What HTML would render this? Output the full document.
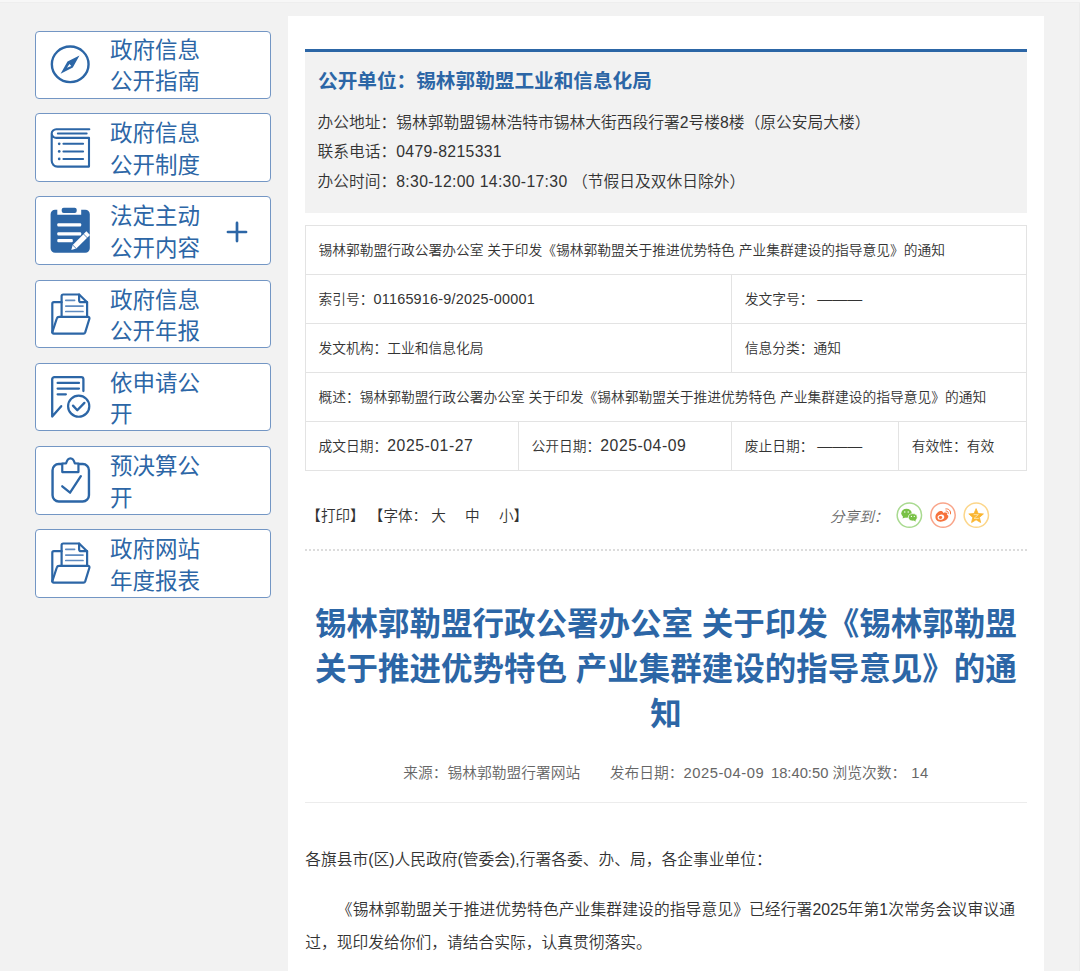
<!DOCTYPE html>
<html lang="zh-CN">
<head>
<meta charset="utf-8">
<title>锡林郭勒盟行政公署办公室 关于印发《锡林郭勒盟关于推进优势特色 产业集群建设的指导意见》的通知</title>
<style>
*{box-sizing:border-box;margin:0;padding:0}
html,body{width:1080px;height:971px;overflow:hidden;background:#f2f2f2}
body{position:relative;font-family:"Liberation Sans","Noto Sans CJK SC",sans-serif;color:#333;font-weight:350;-webkit-font-smoothing:antialiased}
.topstrip{position:absolute;left:0;top:0;width:1080px;height:3px;background:#f7f7f7;border-bottom:1px solid #eee}
.rstrip{position:absolute;left:1079px;top:3px;width:1px;height:968px;background:#ebebeb}
/* sidebar */
.nav{position:absolute;left:35px;width:236px;height:68.5px;border:1px solid #7396c4;border-radius:4px;background:#fff;color:#2c66a6}
.nav svg{position:absolute;left:0;top:0}
.nav .t{position:absolute;left:74px;top:4.2px;width:100px;font-size:22.5px;line-height:31.5px;letter-spacing:0;font-weight:400}
.n1 svg{margin-top:-.9px;margin-left:-.2px}.n1 .t{margin-top:-.8px}
.nav .plus{position:absolute;left:191.5px;top:23.7px;width:20px;height:20px}
.nav .plus:before,.nav .plus:after{content:"";position:absolute;background:#2c66a6}
.nav .plus:before{left:0;top:8.8px;width:20px;height:2.4px}
.nav .plus:after{left:8.8px;top:0;width:2.4px;height:20px}
/* main */
.panel{position:absolute;left:288px;top:16px;width:755.5px;height:960px;background:#fff}
.bar{position:absolute;left:305px;top:49px;width:721.5px;height:4px;background:#2c66a6}
.info{position:absolute;left:305px;top:52px;width:721.5px;height:161px;background:#f2f2f2}
.info h3{position:absolute;left:13px;top:15.3px;font-size:19.65px;line-height:28px;font-weight:bold;color:#2c66a6;white-space:nowrap}
.info p{position:absolute;left:12.5px;font-size:15.75px;line-height:29.25px;white-space:nowrap;color:#333}
table.meta{position:absolute;left:305px;top:225px;width:721.5px;border-collapse:collapse;table-layout:fixed;font-size:13.75px;color:#333}
table.meta td{border:1px solid #e3e3e3;height:49px;padding:0 0 3px 12.5px;white-space:nowrap;vertical-align:middle}
table.meta td b{font-weight:normal;font-size:15.75px}
.tools{position:absolute;left:306.3px;top:502px;font-size:14.625px;line-height:28px;color:#333;white-space:nowrap}
.tools i{display:inline-block;width:19.2px}
.share{position:absolute;left:830px;top:502.5px;font-size:14.625px;line-height:28px;color:#666;font-style:italic;white-space:nowrap}
.dots{position:absolute;left:305px;top:549px;width:721.5px;height:2px;background:repeating-linear-gradient(90deg,#dcdcdc 0,#dcdcdc 2px,transparent 2px,transparent 4px)}
h1{position:absolute;left:305.5px;top:601.5px;width:721px;text-align:center;font-size:31.5px;line-height:45px;font-weight:bold;color:#2c66a6}
.src{position:absolute;left:305.5px;top:758.5px;width:721px;text-align:center;font-size:14.75px;line-height:28px;color:#666;white-space:nowrap}
.hr{position:absolute;left:305px;top:802px;width:721.5px;height:1px;background:#ececec}
.body{position:absolute;left:305.3px;top:842.6px;width:709.6px;font-size:15.75px;line-height:33.75px;color:#333;text-align:justify}
.body p{margin-bottom:16.25px}
.l{letter-spacing:.34px}
.n{font-size:14.4px;letter-spacing:.23px}
.d{font-size:15.75px;letter-spacing:.55px}
.dash{font-size:15px}
.s{letter-spacing:.55px}
.s2{letter-spacing:0;margin-left:2.5px}
</style>
</head>
<body>
<div class="topstrip"></div><div class="rstrip"></div>

<div class="nav n1" style="top:30.6px;height:68.4px"><svg width="70" height="69" viewBox="0 0 70 69" style="left:-0.8px;top:-0.8px" fill="none" stroke="#2c66a6" stroke-width="2.3" stroke-linecap="round" stroke-linejoin="round"><ellipse cx="35.2" cy="34.35" rx="18.35" ry="17.8" stroke-width="2.4"/><path d="M44.5 25.5 L37.8 37.6 L25.6 43.7 L32.5 31.6 Z M31.9 37.7 L34.5 34 L36.3 35.9 Z" fill="#2c66a6" fill-rule="evenodd" stroke="none"/></svg><div class="t">政府信息<br>公开指南</div></div>
<div class="nav" style="top:113px"><svg width="70" height="69" viewBox="0 0 70 69" style="left:-0.8px;top:-0.8px" fill="none" stroke="#2c66a6" stroke-width="2.3" stroke-linecap="round" stroke-linejoin="round"><path d="M54.3 16.2 H21.5 A4.6 4.35 0 0 0 16.7 20.6 A4.6 4.35 0 0 0 21.5 24.9 H54 V53.6 H22.5 A5.8 5.8 0 0 1 16.7 47.8 V20.6" stroke-width="2.1"/><path d="M22.8 20.5 H51.7" stroke-width="1.9"/><g stroke-width="2"><path d="M28.4 30.8 H48.1 M28.4 38.4 H48.1 M28.4 45.9 H48.1"/></g><g fill="#2c66a6" stroke="none"><circle cx="24.2" cy="30.8" r="1.35"/><circle cx="24.2" cy="38.4" r="1.35"/><circle cx="24.2" cy="45.9" r="1.35"/></g></svg><div class="t">政府信息<br>公开制度</div></div>
<div class="nav" style="top:196.25px"><svg width="70" height="69" viewBox="0 0 70 69" style="left:-0.8px;top:-0.8px" fill="none" stroke="#2c66a6" stroke-width="2.3" stroke-linecap="round" stroke-linejoin="round"><g stroke="none"><path fill="#2c66a6" d="M20.1 13.65 H22.3 V18.75 H46.2 V13.65 H50.3 A4.5 4.5 0 0 1 54.8 18.15 V52.25 A4.5 4.5 0 0 1 50.3 56.75 H20.1 A4.5 4.5 0 0 1 15.6 52.25 V18.15 A4.5 4.5 0 0 1 20.1 13.65 Z"/><rect fill="#2c66a6" x="26.7" y="11.7" width="15" height="5.3" rx="2"/><g fill="#fff"><rect x="22.3" y="27.3" width="23.9" height="3.3" rx="1"/><rect x="22.3" y="36.3" width="23.9" height="3.3" rx="1"/><rect x="22.3" y="42.9" width="15.5" height="3.3" rx="1"/><path d="M36.3 54.1 L37.7 49 L51.4 35.3 L55 38.9 L41.3 52.6 Z"/></g></g><path d="M37.9 49.2 L41.1 52.4 M48.6 38.1 L52.2 41.7" stroke="#2c66a6" stroke-width="0.8"/></svg><div class="t">法定主动<br>公开内容</div><svg width="26" height="26" viewBox="0 0 26 26" style="left:188.3px;top:21.6px" fill="none" stroke="#2c66a6" stroke-width="2.7" stroke-linecap="round"><path d="M3.95 13 H22.05 M13 3.95 V22.05"/></svg></div>
<div class="nav" style="top:279.5px"><svg width="70" height="69" viewBox="0 0 70 69" style="left:-0.8px;top:-0.8px" fill="none" stroke="#2c66a6" stroke-width="2.3" stroke-linecap="round" stroke-linejoin="round"><g transform="translate(0.7,-0.1)"><path d="M25.9 36.8 V16.2 A1.6 1.6 0 0 1 27.5 14.6 H43.4 L51.4 22.3 V36.8" stroke-width="2.2"/><path d="M43.4 14.6 V20.3 A2 2 0 0 0 45.4 22.3 H51.4" stroke-width="2.2"/><path d="M30.1 20.4 H38.9 M30.1 26.2 H47.3 M30.1 31.6 H47.3" stroke-width="1.7" stroke="#5f8bc0"/><path d="M25.9 22.3 H18.2 A1.6 1.6 0 0 0 16.6 23.9 V52.5" stroke-width="2.2"/><path d="M23.4 36.9 H52.3 A1.5 1.5 0 0 1 53.7 38.9 L49.5 52.5 A1.8 1.8 0 0 1 47.8 53.7 H18 A1.4 1.4 0 0 1 16.7 51.9 L21.1 38.6 A2.4 2.4 0 0 1 23.4 36.9 Z" stroke-width="2.2"/></g></svg><div class="t">政府信息<br>公开年报</div></div>
<div class="nav" style="top:362.75px"><svg width="70" height="69" viewBox="0 0 70 69" style="left:-0.8px;top:-0.8px" fill="none" stroke="#2c66a6" stroke-width="2.3" stroke-linecap="round" stroke-linejoin="round"><g transform="translate(0.6,0)"><path d="M47.8 28.1 V16.3 A2.2 2.2 0 0 0 45.6 14.1 H18.8 A2.2 2.2 0 0 0 16.6 16.3 V53.6 L25.6 43.2" stroke-width="2.3"/><path d="M22 19.9 H43.4 M22 25.6 H43.4 M22 31.3 H30.3" stroke-width="2.2"/><circle cx="43.1" cy="43.15" r="10.6" stroke-width="2.2"/><path d="M37.4 42.6 L41.7 47.2 L48.8 39.9" stroke-width="2.3"/></g></svg><div class="t">依申请公<br>开</div></div>
<div class="nav" style="top:446px"><svg width="70" height="69" viewBox="0 0 70 69" style="left:-0.8px;top:-0.8px" fill="none" stroke="#2c66a6" stroke-width="2.3" stroke-linecap="round" stroke-linejoin="round"><g transform="translate(0.55,0.1)"><rect x="17" y="17.9" width="36.4" height="37.5" rx="6.2" stroke-width="2.4"/><path d="M26.7 17.4 H30.5 C31.3 14.2 32.7 12.2 34.9 12.2 C37.1 12.2 38.5 14.2 39.3 17.4 H42.9 V26 H26.7 Z" fill="#fff" stroke-width="2.2"/><path d="M26.7 40.2 L34.5 46.6 L45.3 30" stroke-width="2.3"/></g></svg><div class="t">预决算公<br>开</div></div>
<div class="nav" style="top:529.25px"><svg width="70" height="69" viewBox="0 0 70 69" style="left:-0.8px;top:-0.8px" fill="none" stroke="#2c66a6" stroke-width="2.3" stroke-linecap="round" stroke-linejoin="round"><g transform="translate(0.7,-0.1)"><path d="M25.9 36.8 V16.2 A1.6 1.6 0 0 1 27.5 14.6 H43.4 L51.4 22.3 V36.8" stroke-width="2.2"/><path d="M43.4 14.6 V20.3 A2 2 0 0 0 45.4 22.3 H51.4" stroke-width="2.2"/><path d="M30.1 20.4 H38.9 M30.1 26.2 H47.3 M30.1 31.6 H47.3" stroke-width="1.7" stroke="#5f8bc0"/><path d="M25.9 22.3 H18.2 A1.6 1.6 0 0 0 16.6 23.9 V52.5" stroke-width="2.2"/><path d="M23.4 36.9 H52.3 A1.5 1.5 0 0 1 53.7 38.9 L49.5 52.5 A1.8 1.8 0 0 1 47.8 53.7 H18 A1.4 1.4 0 0 1 16.7 51.9 L21.1 38.6 A2.4 2.4 0 0 1 23.4 36.9 Z" stroke-width="2.2"/></g></svg><div class="t">政府网站<br>年度报表</div></div>

<div class="panel"></div>
<div class="bar"></div>
<div class="info">
  <h3>公开单位：锡林郭勒盟工业和信息化局</h3>
  <p style="top:56px">办公地址：锡林郭勒盟锡林浩特市锡林大街西段行署2号楼8楼（原公安局大楼）</p>
  <p style="top:85.25px">联系电话：<span class="l">0479-8215331</span></p>
  <p style="top:114.5px">办公时间：<span class="l">8:30-12:00 14:30-17:30</span> （节假日及双休日除外）</p>
</div>

<table class="meta">
<colgroup><col style="width:213px"><col style="width:213.25px"><col style="width:167px"><col></colgroup>
<tr><td colspan="4">锡林郭勒盟行政公署办公室 关于印发《锡林郭勒盟关于推进优势特色 产业集群建设的指导意见》的通知</td></tr>
<tr><td colspan="2">索引号：<span class="n">01165916-9/2025-00001</span></td><td colspan="2">发文字号： <span class="dash">———</span></td></tr>
<tr><td colspan="2">发文机构：工业和信息化局</td><td colspan="2">信息分类：通知</td></tr>
<tr><td colspan="4">概述：锡林郭勒盟行政公署办公室 关于印发《锡林郭勒盟关于推进优势特色 产业集群建设的指导意见》的通知</td></tr>
<tr><td>成文日期：<span class="d">2025-01-27</span></td><td>公开日期：<span class="d">2025-04-09</span></td><td>废止日期： <span class="dash">———</span></td><td>有效性：有效</td></tr>
</table>

<div class="tools">【打印】 【字体： 大<i></i>中<i></i>小】</div>
<div class="share">分享到：</div>
<svg class="shareico" width="110" height="36" viewBox="0 0 110 36" style="position:absolute;left:890px;top:497px" fill="none">
<circle cx="19.35" cy="18.1" r="12.2" stroke="#a9da90" stroke-width="1.5"/>
<ellipse cx="16.5" cy="16.3" rx="5.2" ry="4.5" fill="#79c146"/><path d="M13.2 19 L12.6 21.6 L15.6 20.2 Z" fill="#79c146"/>
<ellipse cx="22.8" cy="20.3" rx="4.4" ry="3.7" fill="#79c146" stroke="#fff" stroke-width="0.7"/><path d="M25.2 22.8 L26 24.6 L23.6 23.8 Z" fill="#79c146"/>
<circle cx="14.8" cy="15" r="0.7" fill="#fff"/><circle cx="18.2" cy="15" r="0.7" fill="#fff"/><circle cx="21.4" cy="19.4" r="0.6" fill="#fff"/><circle cx="24.3" cy="19.4" r="0.6" fill="#fff"/>
<circle cx="53" cy="18.1" r="12.2" stroke="#f9a58a" stroke-width="1.5"/>
<path d="M45.5 19 C46.1 15.6 50.2 13.2 52.4 14.4 C53.3 14.9 53.1 16 53.1 16 C54.7 15.3 57.2 15.3 57.2 17 C57.2 17.4 57 17.8 57 17.8 C58.3 18.2 58.6 19.3 58.1 20.6 C57 23.2 53.6 24.9 50.3 24.7 C47.2 24.5 45 22.2 45.5 19 Z" fill="#f6733d"/>
<ellipse cx="50.9" cy="20.2" rx="3.4" ry="2.5" fill="#fff" transform="rotate(-12 50.9 20.2)"/><ellipse cx="50.5" cy="20.5" rx="1.7" ry="1.4" fill="#f6733d"/>
<path d="M56 14 C57.4 13.8 58.6 15 58.3 16.4" stroke="#f6733d" stroke-width="1" stroke-linecap="round"/><path d="M55.8 11.9 C58.8 11.4 61.2 13.9 60.5 16.9" stroke="#f6733d" stroke-width="1" stroke-linecap="round"/>
<circle cx="86.3" cy="18.1" r="12.2" stroke="#fcd68a" stroke-width="1.5"/>
<polygon points="86.10,11.60 88.16,16.47 93.42,16.92 89.43,20.38 90.63,25.53 86.10,22.80 81.57,25.53 82.77,20.38 78.78,16.92 84.04,16.47" fill="#fab530" stroke="#fab530" stroke-width="0.8" stroke-linejoin="round"/>
<path d="M83.6 17.6 H88.4 L84 21.4 H88.8" stroke="#fde3a6" stroke-width="0.9"/>
</svg>
<div class="dots"></div>

<h1>锡林郭勒盟行政公署办公室 关于印发《锡林郭勒盟关于推进优势特色 产业集群建设的指导意见》的通知</h1>
<div class="src">来源：锡林郭勒盟行署网站　　发布日期：<span class="s">2025-04-09</span> <span class="s2">18:40:50</span> 浏览次数： <span class="s" style="margin-left:1px">14</span></div>
<div class="hr"></div>
<div class="body">
<p>各旗县市(区)人民政府(管委会),行署各委、办、局，各企事业单位：</p>
<p style="text-indent:2em">《锡林郭勒盟关于推进优势特色产业集群建设的指导意见》已经行署2025年第1次常务会议审议通过，现印发给你们，请结合实际，认真贯彻落实。</p>
</div>
</body>
</html>
